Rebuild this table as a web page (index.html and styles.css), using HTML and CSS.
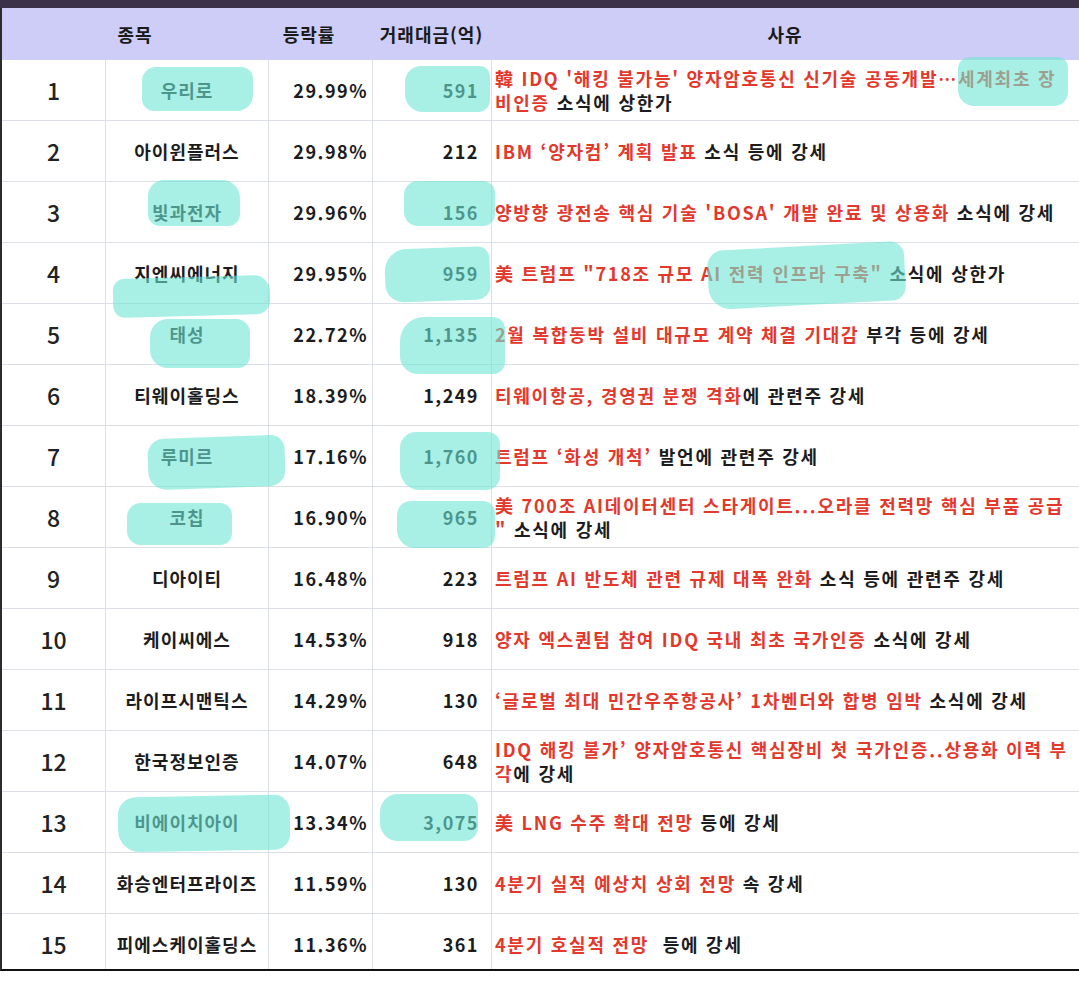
FILE: index.html
```html
<!DOCTYPE html>
<html lang="ko">
<head>
<meta charset="utf-8">
<title>상한가 종목</title>
<link rel="stylesheet" href="styles.css">
</head>
<body>
<div class="page">
  <div class="topbar"></div>
  <div class="sheet">
    <div class="head">
      <div class="h-name">종목</div>
      <div class="h-rate">등락률</div>
      <div class="h-amt">거래대금(억)</div>
      <div class="h-why">사유</div>
    </div>

    <div class="row">
      <div class="rank">1</div><div class="name">우리로</div><div class="rate">29.99%</div><div class="amt">591</div>
      <div class="why"><span class="red">韓 IDQ '해킹 불가능' 양자암호통신 신기술 공동개발…세계최초 장</span><br><span class="red">비인증</span> 소식에 상한가</div>
    </div>
    <div class="row">
      <div class="rank">2</div><div class="name">아이윈플러스</div><div class="rate">29.98%</div><div class="amt">212</div>
      <div class="why"><span class="red">IBM ‘양자컴’ 계획 발표</span> 소식 등에 강세</div>
    </div>
    <div class="row">
      <div class="rank">3</div><div class="name">빛과전자</div><div class="rate">29.96%</div><div class="amt">156</div>
      <div class="why"><span class="red">양방향 광전송 핵심 기술 'BOSA' 개발 완료 및 상용화</span> 소식에 강세</div>
    </div>
    <div class="row">
      <div class="rank">4</div><div class="name">지엔씨에너지</div><div class="rate">29.95%</div><div class="amt">959</div>
      <div class="why"><span class="red">美 트럼프 "718조 규모 AI 전력 인프라 구축"</span> 소식에 상한가</div>
    </div>
    <div class="row">
      <div class="rank">5</div><div class="name">태성</div><div class="rate">22.72%</div><div class="amt">1,135</div>
      <div class="why"><span class="red">2월 복합동박 설비 대규모 계약 체결 기대감</span> 부각 등에 강세</div>
    </div>
    <div class="row">
      <div class="rank">6</div><div class="name">티웨이홀딩스</div><div class="rate">18.39%</div><div class="amt">1,249</div>
      <div class="why"><span class="red">티웨이항공, 경영권 분쟁 격화</span>에 관련주 강세</div>
    </div>
    <div class="row">
      <div class="rank">7</div><div class="name">루미르</div><div class="rate">17.16%</div><div class="amt">1,760</div>
      <div class="why"><span class="red">트럼프 ‘화성 개척’</span> 발언에 관련주 강세</div>
    </div>
    <div class="row">
      <div class="rank">8</div><div class="name">코칩</div><div class="rate">16.90%</div><div class="amt">965</div>
      <div class="why"><span class="red">美 700조 AI데이터센터 스타게이트...오라클 전력망 핵심 부품 공급</span><br><span class="red">"</span> 소식에 강세</div>
    </div>
    <div class="row">
      <div class="rank">9</div><div class="name">디아이티</div><div class="rate">16.48%</div><div class="amt">223</div>
      <div class="why"><span class="red">트럼프 AI 반도체 관련 규제 대폭 완화</span> 소식 등에 관련주 강세</div>
    </div>
    <div class="row">
      <div class="rank">10</div><div class="name">케이씨에스</div><div class="rate">14.53%</div><div class="amt">918</div>
      <div class="why"><span class="red">양자 엑스퀀텀 참여 IDQ 국내 최초 국가인증</span> 소식에 강세</div>
    </div>
    <div class="row">
      <div class="rank">11</div><div class="name">라이프시맨틱스</div><div class="rate">14.29%</div><div class="amt">130</div>
      <div class="why"><span class="red">‘글로벌 최대 민간우주항공사’ 1차벤더와 합병 임박</span> 소식에 강세</div>
    </div>
    <div class="row">
      <div class="rank">12</div><div class="name">한국정보인증</div><div class="rate">14.07%</div><div class="amt">648</div>
      <div class="why"><span class="red">IDQ 해킹 불가’ 양자암호통신 핵심장비 첫 국가인증..상용화 이력 부</span><br><span class="red">각</span>에 강세</div>
    </div>
    <div class="row">
      <div class="rank">13</div><div class="name">비에이치아이</div><div class="rate">13.34%</div><div class="amt">3,075</div>
      <div class="why"><span class="red">美 LNG 수주 확대 전망</span> 등에 강세</div>
    </div>
    <div class="row">
      <div class="rank">14</div><div class="name">화승엔터프라이즈</div><div class="rate">11.59%</div><div class="amt">130</div>
      <div class="why"><span class="red">4분기 실적 예상치 상회 전망</span> 속 강세</div>
    </div>
    <div class="row">
      <div class="rank">15</div><div class="name">피에스케이홀딩스</div><div class="rate">11.36%</div><div class="amt">361</div>
      <div class="why"><span class="red">4분기 호실적 전망</span>&nbsp; 등에 강세</div>
    </div>
  </div>

  <div class="marks" aria-hidden="true">
    <span class="mark m1"></span>
    <span class="mark m2"></span>
    <span class="mark m3"></span>
    <span class="mark m4"></span>
    <span class="mark m5"></span>
    <span class="mark m6"></span>
    <span class="mark m7"></span>
    <span class="mark m8"></span>
    <span class="mark m9"></span>
    <span class="mark m10"></span>
    <span class="mark m11"></span>
    <span class="mark m12"></span>
    <span class="mark m13"></span>
    <span class="mark m14"></span>
    <span class="mark m15"></span>
    <span class="mark m16"></span>
  </div>
</div>
</body>
</html>
```

FILE: styles.css
```css
* { box-sizing: border-box; }

html, body {
  margin: 0;
  padding: 0;
  background: #ffffff;
}

body {
  font-family: "Noto Sans CJK KR", "Noto Sans", sans-serif;
  color: #1c1c1e;
}

.page {
  position: relative;
  width: 1079px;
  height: 1002px;
  overflow: hidden;
}

.topbar {
  height: 8px;
  background: #3b3148;
}

.sheet {
  height: 963px;
  border-left: 2px solid #2b2b2b;
  border-bottom: 2px solid #111111;
  overflow: hidden;
}

.head {
  display: grid;
  grid-template-columns: 266px 104px 119px 1fr;
  height: 52px;
  align-items: center;
  background: #cdcdf7;
  font-size: 18px;
  font-weight: 700;
  letter-spacing: 1px;
  text-align: center;
  color: #1a1a1a;
}

.h-rate { padding-right: 22px; }

.row {
  display: grid;
  grid-template-columns: 104px 163px 104px 119px 1fr;
  height: 61px;
  border-bottom: 1px solid #dcdfea;
}

.row > div {
  display: flex;
  align-items: center;
  border-right: 1px solid #dcdfea;
  white-space: nowrap;
}

.rank {
  justify-content: center;
  font-size: 23px;
  font-weight: 500;
  color: #222;
}

.name {
  justify-content: center;
  font-size: 18px;
  font-weight: 700;
  letter-spacing: 1px;
}

.rate {
  justify-content: flex-end;
  padding-right: 4px;
  font-size: 18px;
  font-weight: 700;
  letter-spacing: 1.5px;
}

.amt {
  justify-content: flex-end;
  padding-right: 12px;
  font-size: 18px;
  font-weight: 700;
  letter-spacing: 1.5px;
}

.row > .why {
  display: block;
  align-self: center;
  border-right: none;
  padding-left: 3px;
  font-size: 18px;
  font-weight: 700;
  letter-spacing: 1.75px;
  line-height: 24px;
  overflow: hidden;
}

.red { color: #e3382c; }

/* highlighter strokes drawn over the table */
.marks {
  position: absolute;
  inset: 0;
  pointer-events: none;
}

.mark {
  position: absolute;
  background: rgba(110, 230, 212, 0.6);
  border-radius: 14px 12px 16px 12px;
}

.m1  { left: 142px; top: 67px;  width: 111px; height: 44px; }
.m2  { left: 405px; top: 66px;  width: 85px;  height: 46px; border-radius: 16px 10px 12px 18px; }
.m3  { left: 958px; top: 57px;  width: 110px; height: 49px; border-radius: 12px 10px 14px 16px; }
.m4  { left: 148px; top: 180px; width: 92px;  height: 46px; border-radius: 16px 18px 12px 12px; }
.m5  { left: 404px; top: 181px; width: 91px;  height: 45px; border-radius: 14px 12px 12px 14px; }
.m6  { left: 113px; top: 277px; width: 157px; height: 39px; border-radius: 12px 16px 14px 12px; transform: rotate(-1.5deg); }
.m7  { left: 385px; top: 248px; width: 105px; height: 53px; border-radius: 22px 12px 14px 18px; transform: rotate(-2deg); }
.m8  { left: 708px; top: 246px; width: 197px; height: 59px; border-radius: 16px 14px 14px 22px; transform: rotate(-3deg); }
.m9  { left: 150px; top: 319px; width: 100px; height: 49px; border-radius: 18px 14px 12px 18px; }
.m10 { left: 400px; top: 317px; width: 105px; height: 57px; border-radius: 24px 12px 12px 18px; }
.m11 { left: 148px; top: 437px; width: 137px; height: 51px; border-radius: 16px 14px 16px 18px; transform: rotate(-2deg); }
.m12 { left: 400px; top: 432px; width: 100px; height: 58px; border-radius: 16px 12px 14px 20px; }
.m13 { left: 127px; top: 503px; width: 105px; height: 42px; border-radius: 14px 12px 12px 14px; }
.m14 { left: 397px; top: 501px; width: 98px;  height: 47px; border-radius: 14px 12px 12px 18px; }
.m15 { left: 118px; top: 796px; width: 172px; height: 55px; border-radius: 18px 16px 16px 22px; transform: rotate(-1deg); }
.m16 { left: 380px; top: 794px; width: 98px;  height: 47px; border-radius: 18px 14px 14px 18px; }
```
